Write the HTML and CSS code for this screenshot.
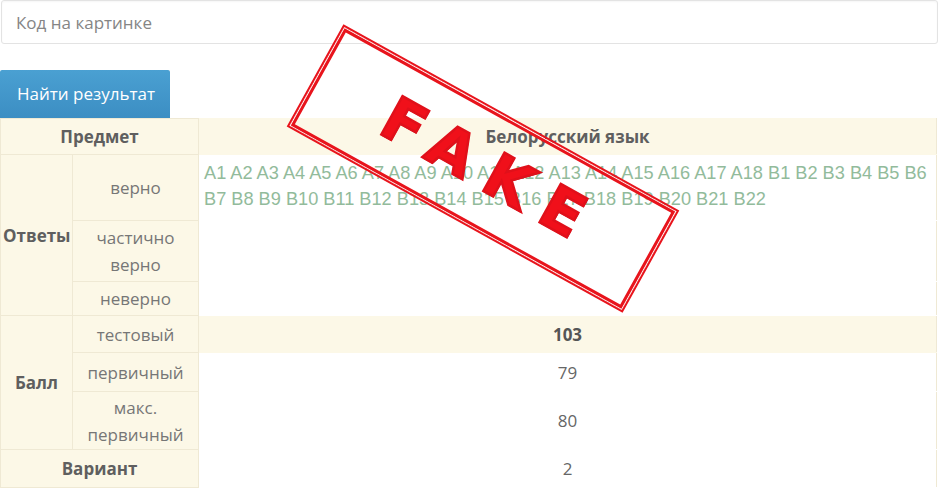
FILE: index.html
```html
<!DOCTYPE html>
<html lang="ru">
<head>
<meta charset="utf-8">
<title>Результаты тестирования</title>
<link rel="stylesheet" href="styles.css">
</head>
<body>
<div class="page">
  <div class="captcha">
    <input class="captcha-input" type="text" placeholder="Код на картинке">
  </div>
  <button class="btn-find" type="button">Найти результат</button>
  <table class="results">
    <colgroup>
      <col class="c-group">
      <col class="c-label">
      <col class="c-value">
    </colgroup>
    <tr class="row-subject hl">
      <th colspan="2">Предмет</th>
      <th class="value">Белорусский язык</th>
    </tr>
    <tr class="row-right">
      <th rowspan="3" class="group">Ответы</th>
      <td class="label">верно</td>
      <td class="answers">A1 A2 A3 A4 A5 A6 A7 A8 A9 A10 A11 A12 A13 A14 A15 A16 A17 A18 B1 B2 B3 B4 B5 B6 B7 B8 B9 B10 B11 B12 B13 B14 B15 B16 B17 B18 B19 B20 B21 B22</td>
    </tr>
    <tr class="row-partial">
      <td class="label">частично<br>верно</td>
      <td class="answers"></td>
    </tr>
    <tr class="row-wrong">
      <td class="label">неверно</td>
      <td class="answers"></td>
    </tr>
    <tr class="row-test hl">
      <th rowspan="3" class="group">Балл</th>
      <td class="label">тестовый</td>
      <td class="value"><b>103</b></td>
    </tr>
    <tr class="row-primary">
      <td class="label">первичный</td>
      <td class="value">79</td>
    </tr>
    <tr class="row-max">
      <td class="label">макс.<br>первичный</td>
      <td class="value">80</td>
    </tr>
    <tr class="row-variant">
      <th colspan="2">Вариант</th>
      <td class="value">2</td>
    </tr>
  </table>

  <!-- rubber stamp laid over the results -->
  <div class="stamp">
    <span class="stamp-text">FAKE</span>
  </div>
</div>
</body>
</html>
```

FILE: styles.css
```css
html, body {
  margin: 0;
  padding: 0;
  background: #fff;
}

body {
  font-family: "Open Sans", "Noto Sans", sans-serif;
  font-size: 17px;
  color: #666;
  overflow: hidden;
}

.page {
  position: relative;
  width: 937px;
  height: 490px;
}

/* captcha field */
.captcha-input {
  display: block;
  box-sizing: border-box;
  width: 937px;
  height: 44px;
  margin: 0 0 0 1px;
  padding: 0 14px;
  border: 1px solid #e3e3e3;
  border-radius: 3px;
  box-shadow: inset 0 1px 2px rgba(0, 0, 0, 0.04);
  font-family: inherit;
  font-size: 17px;
  color: #555;
  background: #fff;
  outline: none;
}

.captcha-input::placeholder {
  color: #858585;
}

/* search button */
.btn-find {
  display: block;
  width: 170px;
  height: 48px;
  margin-top: 26px;
  padding: 0 0 2px 2px;
  border: 0;
  border-radius: 2px 2px 0 0;
  background: linear-gradient(#4aa0d2, #3c8ec3);
  color: #fff;
  font-family: inherit;
  font-size: 17px;
  text-align: center;
}

/* results table */
.results {
  width: 937px;
  border-collapse: collapse;
  table-layout: fixed;
  border: 1px solid #efe9d4;
}

.c-group { width: 72px; }
.c-label { width: 126px; }

.results th,
.results td {
  border: 1px solid #efe9d4;
  padding: 3px 5px;
  line-height: 27px;
  text-align: center;
  vertical-align: middle;
}

.results th {
  font-weight: 700;
  color: #5f5f5f;
  background: #fcf8e7;
}

.results th.group {
  padding: 3px 2px;
}

.results td.label {
  background: #fcf8e7;
  color: #767676;
}

.results td.value,
.results th.value,
.results td.answers {
  background: #fff;
  border-color: #fff;
  border-right-color: #efe9d4;
}

.results tr.hl .value {
  background: #fcf8e7;
  border-color: #fcf8e7;
  border-right-color: #efe9d4;
}

.results td.value b {
  color: #555;
}

.results td.answers {
  text-align: left;
  vertical-align: top;
  padding: 5px 2px 0 5px;
  font-family: "Liberation Sans", Arial, sans-serif;
  font-size: 18.2px;
  line-height: 26px;
  color: #92bb9b;
}

.row-subject { height: 36px; }
.row-right { height: 66px; }
.row-partial { height: 61px; }
.row-wrong { height: 33px; }
.row-test { height: 37px; }
.row-primary { height: 39px; }
.row-max { height: 58px; }
.row-max td { padding-top: 1px; padding-bottom: 1px; }
.row-variant { height: 38px; }

/* stamp */
.stamp {
  position: absolute;
  left: 291px;
  top: 110px;
  width: 384px;
  height: 117px;
  box-sizing: border-box;
  border: 2px solid #e8141c;
  box-shadow: inset 0 0 0 1px #fff, inset 0 0 0 4px #e8141c;
  transform: rotate(29deg);
  display: flex;
  align-items: center;
  justify-content: center;
}

.stamp-text {
  font-family: "DejaVu Sans", sans-serif;
  font-weight: 700;
  font-size: 60px;
  line-height: 1;
  letter-spacing: 18px;
  margin-right: -18px;
  margin-top: -3px;
  color: #f0101a;
  -webkit-text-stroke: 2.5px #e0101a;
  text-shadow: 1px 1px 0 #9a0a10;
}
```
